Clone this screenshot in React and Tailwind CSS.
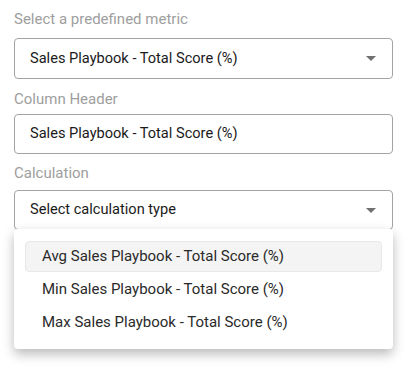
const metric = "Sales Playbook - Total Score (%)";
const options = ["Avg", "Min", "Max"];

function Caret() {
  return (
    <svg width="10" height="5" viewBox="0 0 10 5" className="shrink-0 fill-[#707070]">
      <path d="M0 0h10L5 5z" />
    </svg>
  );
}

function FieldLabel({ children }) {
  return <p className="text-[15px] leading-[18px] text-[#9e9e9e]">{children}</p>;
}

export default function App() {
  return (
    <div className="min-h-[372px] bg-white pl-[14px] pt-[10px] font-['Roboto',sans-serif] text-[15px]">
      <div className="w-[379px]">
        <FieldLabel>Select a predefined metric</FieldLabel>
        <div className="mt-[10px] flex h-[41px] items-center justify-between rounded-[4px] border border-[#a3a3a3] pl-[15px] pr-[16px] text-[14.6px] text-[#1a1a1a]">
          <span>{metric}</span>
          <Caret />
        </div>

        <div className="mt-[11px]">
          <FieldLabel>Column Header</FieldLabel>
        </div>
        <div className="mt-[6px] flex h-[40px] items-center rounded-[4px] border border-[#a3a3a3] pl-[15px] text-[14.6px] text-[#1a1a1a]">
          {metric}
        </div>

        <div className="mt-[10px]">
          <FieldLabel>Calculation</FieldLabel>
        </div>
        <div className="mt-[8px] flex h-[40px] items-center justify-between rounded-[4px] border border-[#a3a3a3] pl-[15px] pr-[16px] text-[14.6px] text-[#1a1a1a]">
          <span>Select calculation type</span>
          <Caret />
        </div>

        <div className="relative">
          <div className="absolute left-0 right-0 top-[-1px] z-10 flex flex-col gap-[2px] rounded-[4px] bg-white px-[11px] pb-[11px] pt-[12px] shadow-[0_5px_12px_rgba(0,0,0,0.28)]">
            {options.map((o, i) => (
              <div
                key={o}
                className={
                  "flex h-[31px] items-center rounded-[4px] text-[#2a2a2a] " +
                  (i === 0 ? "border border-[#e8e8e8] bg-[#f4f4f4] pl-[16px]" : "pl-[17px]")
                }
              >
                {o} {metric}
              </div>
            ))}
          </div>
        </div>
      </div>
    </div>
  );
}
